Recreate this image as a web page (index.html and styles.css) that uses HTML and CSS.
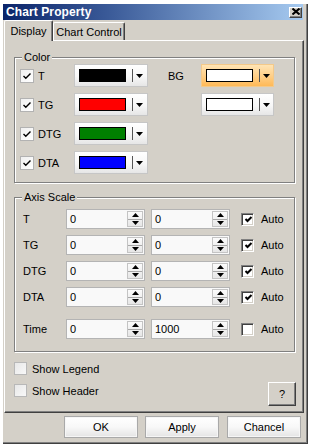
FILE: index.html
```html
<!DOCTYPE html>
<html>
<head>
<meta charset="utf-8">
<title>Chart Property</title>
<link rel="stylesheet" href="styles.css">
</head>
<body>
<div class="dialog">
  <div class="titlebar">
    <span class="title">Chart Property</span>
    <span class="close"><svg width="8" height="7" viewBox="0 0 8 7"><path d="M0.5 0.5 L7.5 6.5 M7.5 0.5 L0.5 6.5" stroke="#000" stroke-width="2"/></svg></span>
  </div>
  <div class="tabs">
    <div class="tab active">Display</div>
    <div class="tab">Chart Control</div>
  </div>
  <div class="panel">
    <div class="group color-group">
      <span class="legend">Color</span>
      <div class="crow">
        <span class="cbl"><span class="xcb"><svg width="12" height="12" viewBox="0 0 12 12"><path d="M2.5 6 L4.8 8.3 L9.5 3.5" fill="none" stroke="#000" stroke-width="1.4"/></svg></span>T</span>
        <span class="combo"><span class="swatch sw-black"></span><span class="sep"></span><svg class="arrow" width="7" height="4" viewBox="0 0 7 4"><path d="M0 0 H7 L3.5 4 Z" fill="#000"/></svg></span>
        <span class="bglabel">BG</span>
        <span class="combo hot"><span class="swatch sw-white"></span><span class="sep"></span><svg class="arrow" width="7" height="4" viewBox="0 0 7 4"><path d="M0 0 H7 L3.5 4 Z" fill="#000"/></svg></span>
      </div>
      <div class="crow">
        <span class="cbl"><span class="xcb"><svg width="12" height="12" viewBox="0 0 12 12"><path d="M2.5 6 L4.8 8.3 L9.5 3.5" fill="none" stroke="#000" stroke-width="1.4"/></svg></span>TG</span>
        <span class="combo"><span class="swatch sw-red"></span><span class="sep"></span><svg class="arrow" width="7" height="4" viewBox="0 0 7 4"><path d="M0 0 H7 L3.5 4 Z" fill="#000"/></svg></span>
        <span class="bglabel"></span>
        <span class="combo"><span class="swatch sw-white"></span><span class="sep"></span><svg class="arrow" width="7" height="4" viewBox="0 0 7 4"><path d="M0 0 H7 L3.5 4 Z" fill="#000"/></svg></span>
      </div>
      <div class="crow">
        <span class="cbl"><span class="xcb"><svg width="12" height="12" viewBox="0 0 12 12"><path d="M2.5 6 L4.8 8.3 L9.5 3.5" fill="none" stroke="#000" stroke-width="1.4"/></svg></span>DTG</span>
        <span class="combo"><span class="swatch sw-green"></span><span class="sep"></span><svg class="arrow" width="7" height="4" viewBox="0 0 7 4"><path d="M0 0 H7 L3.5 4 Z" fill="#000"/></svg></span>
      </div>
      <div class="crow">
        <span class="cbl"><span class="xcb"><svg width="12" height="12" viewBox="0 0 12 12"><path d="M2.5 6 L4.8 8.3 L9.5 3.5" fill="none" stroke="#000" stroke-width="1.4"/></svg></span>DTA</span>
        <span class="combo"><span class="swatch sw-blue"></span><span class="sep"></span><svg class="arrow" width="7" height="4" viewBox="0 0 7 4"><path d="M0 0 H7 L3.5 4 Z" fill="#000"/></svg></span>
      </div>
    </div>

    <div class="group axis-group">
      <span class="legend">Axis Scale</span>
      <div class="arow">
        <span class="alabel">T</span>
        <span class="spinbox"><span class="val">0</span><span class="spin"><span class="sb"><svg width="7" height="4" viewBox="0 0 7 4"><path d="M0 4 H7 L3.5 0 Z" fill="#000"/></svg></span><span class="sb down"><svg width="7" height="4" viewBox="0 0 7 4"><path d="M0 0 H7 L3.5 4 Z" fill="#000"/></svg></span></span></span>
        <span class="spinbox second"><span class="val">0</span><span class="spin"><span class="sb"><svg width="7" height="4" viewBox="0 0 7 4"><path d="M0 4 H7 L3.5 0 Z" fill="#000"/></svg></span><span class="sb down"><svg width="7" height="4" viewBox="0 0 7 4"><path d="M0 0 H7 L3.5 4 Z" fill="#000"/></svg></span></span></span>
        <span class="ccb"><svg width="9" height="9" viewBox="0 0 9 9"><path d="M1.5 4 L3.5 6 L7.5 2" fill="none" stroke="#000" stroke-width="2"/></svg></span>
        <span class="autolabel">Auto</span>
      </div>
      <div class="arow">
        <span class="alabel">TG</span>
        <span class="spinbox"><span class="val">0</span><span class="spin"><span class="sb"><svg width="7" height="4" viewBox="0 0 7 4"><path d="M0 4 H7 L3.5 0 Z" fill="#000"/></svg></span><span class="sb down"><svg width="7" height="4" viewBox="0 0 7 4"><path d="M0 0 H7 L3.5 4 Z" fill="#000"/></svg></span></span></span>
        <span class="spinbox second"><span class="val">0</span><span class="spin"><span class="sb"><svg width="7" height="4" viewBox="0 0 7 4"><path d="M0 4 H7 L3.5 0 Z" fill="#000"/></svg></span><span class="sb down"><svg width="7" height="4" viewBox="0 0 7 4"><path d="M0 0 H7 L3.5 4 Z" fill="#000"/></svg></span></span></span>
        <span class="ccb"><svg width="9" height="9" viewBox="0 0 9 9"><path d="M1.5 4 L3.5 6 L7.5 2" fill="none" stroke="#000" stroke-width="2"/></svg></span>
        <span class="autolabel">Auto</span>
      </div>
      <div class="arow">
        <span class="alabel">DTG</span>
        <span class="spinbox"><span class="val">0</span><span class="spin"><span class="sb"><svg width="7" height="4" viewBox="0 0 7 4"><path d="M0 4 H7 L3.5 0 Z" fill="#000"/></svg></span><span class="sb down"><svg width="7" height="4" viewBox="0 0 7 4"><path d="M0 0 H7 L3.5 4 Z" fill="#000"/></svg></span></span></span>
        <span class="spinbox second"><span class="val">0</span><span class="spin"><span class="sb"><svg width="7" height="4" viewBox="0 0 7 4"><path d="M0 4 H7 L3.5 0 Z" fill="#000"/></svg></span><span class="sb down"><svg width="7" height="4" viewBox="0 0 7 4"><path d="M0 0 H7 L3.5 4 Z" fill="#000"/></svg></span></span></span>
        <span class="ccb"><svg width="9" height="9" viewBox="0 0 9 9"><path d="M1.5 4 L3.5 6 L7.5 2" fill="none" stroke="#000" stroke-width="2"/></svg></span>
        <span class="autolabel">Auto</span>
      </div>
      <div class="arow">
        <span class="alabel">DTA</span>
        <span class="spinbox"><span class="val">0</span><span class="spin"><span class="sb"><svg width="7" height="4" viewBox="0 0 7 4"><path d="M0 4 H7 L3.5 0 Z" fill="#000"/></svg></span><span class="sb down"><svg width="7" height="4" viewBox="0 0 7 4"><path d="M0 0 H7 L3.5 4 Z" fill="#000"/></svg></span></span></span>
        <span class="spinbox second"><span class="val">0</span><span class="spin"><span class="sb"><svg width="7" height="4" viewBox="0 0 7 4"><path d="M0 4 H7 L3.5 0 Z" fill="#000"/></svg></span><span class="sb down"><svg width="7" height="4" viewBox="0 0 7 4"><path d="M0 0 H7 L3.5 4 Z" fill="#000"/></svg></span></span></span>
        <span class="ccb"><svg width="9" height="9" viewBox="0 0 9 9"><path d="M1.5 4 L3.5 6 L7.5 2" fill="none" stroke="#000" stroke-width="2"/></svg></span>
        <span class="autolabel">Auto</span>
      </div>
      <div class="arow time">
        <span class="alabel">Time</span>
        <span class="spinbox"><span class="val">0</span><span class="spin"><span class="sb"><svg width="7" height="4" viewBox="0 0 7 4"><path d="M0 4 H7 L3.5 0 Z" fill="#000"/></svg></span><span class="sb down"><svg width="7" height="4" viewBox="0 0 7 4"><path d="M0 0 H7 L3.5 4 Z" fill="#000"/></svg></span></span></span>
        <span class="spinbox second"><span class="val">1000</span><span class="spin"><span class="sb"><svg width="7" height="4" viewBox="0 0 7 4"><path d="M0 4 H7 L3.5 0 Z" fill="#000"/></svg></span><span class="sb down"><svg width="7" height="4" viewBox="0 0 7 4"><path d="M0 0 H7 L3.5 4 Z" fill="#000"/></svg></span></span></span>
        <span class="ccb"></span>
        <span class="autolabel">Auto</span>
      </div>
    </div>

    <div class="bottom">
      <div class="opts">
        <div class="opt"><span class="fcb"></span>Show Legend</div>
        <div class="opt"><span class="fcb"></span>Show Header</div>
      </div>
      <div class="help">?</div>
    </div>
  </div>
  <div class="buttons">
    <div class="btn">OK</div>
    <div class="btn">Apply</div>
    <div class="btn last">Chancel</div>
  </div>
</div>
</body>
</html>
```

FILE: styles.css
```css
* { box-sizing: border-box; }

html, body {
  margin: 0;
  padding: 0;
}

body {
  width: 309px;
  height: 447px;
  overflow: hidden;
  background: #ffffff;
  font-family: "Liberation Sans", Arial, sans-serif;
  font-size: 11px;
  color: #000;
}

.dialog {
  margin: 4px 0 0 3px;
  width: 305px;
  height: 440px;
  background: #d4d0c8;
  border-right: 1px solid #404040;
  border-bottom: 1px solid #404040;
  box-shadow: inset -1px -1px 0 #808080;
  display: flex;
  flex-direction: column;
}

.titlebar {
  width: 300px;
  height: 16px;
  flex: none;
  background: linear-gradient(90deg, #0a246a 0%, #3a5a98 35%, #a6caf0 100%);
  display: flex;
  align-items: center;
  padding-left: 3px;
}

.title {
  color: #fff;
  font-weight: bold;
  font-size: 12px;
  letter-spacing: 0.1px;
}

.close {
  margin-left: auto;
  margin-right: 1px;
  width: 13px;
  height: 11px;
  background: #d4d0c8;
  border-top: 1px solid #fff;
  border-left: 1px solid #fff;
  border-right: 1px solid #404040;
  border-bottom: 1px solid #404040;
  box-shadow: inset -1px -1px 0 #808080;
  display: flex;
  align-items: center;
  justify-content: center;
  padding-bottom: 1px;
}

.close svg { display: block; }

.tabs {
  height: 20px;
  flex: none;
  display: flex;
  align-items: flex-end;
  padding-left: 1px;
}

.tab {
  width: 72px;
  height: 18px;
  border-top: 1px solid #fff;
  border-left: 1px solid #fff;
  border-right: 1px solid #404040;
  box-shadow: inset -1px 0 0 #808080;
  border-radius: 2px 2px 0 0;
  display: flex;
  align-items: center;
  justify-content: center;
  padding-top: 1px;
  white-space: nowrap;
}

.tab.active {
  width: 49px;
  height: 21px;
  margin-bottom: -1px;
  position: relative;
  z-index: 1;
  background: #d4d0c8;
  padding-top: 0;
  padding-bottom: 1px;
}

.panel {
  margin-left: 1px;
  width: 300px;
  height: 373px;
  flex: none;
  border-top: 1px solid #fff;
  border-left: 1px solid #fff;
  border-right: 1px solid #404040;
  border-bottom: 1px solid #404040;
  box-shadow: inset -1px -1px 0 #808080;
  display: flex;
  flex-direction: column;
}

.group {
  position: relative;
  margin-left: 9px;
  width: 281px;
  border: 1px solid #808080;
  box-shadow: inset 1px 1px 0 #fff, 1px 1px 0 #fff;
  display: flex;
  flex-direction: column;
}

.legend {
  position: absolute;
  top: -8px;
  left: 7px;
  padding: 0 2px;
  background: #d4d0c8;
  line-height: 14px;
}

.color-group {
  margin-top: 16px;
  height: 126px;
  padding: 6px 0 0 5px;
  gap: 6px;
}

.crow {
  height: 23px;
  display: flex;
  align-items: center;
}

.cbl {
  width: 54px;
  display: flex;
  align-items: center;
  gap: 4px;
}

.xcb {
  width: 14px;
  height: 14px;
  border: 1px solid #b2b2b2;
  background: linear-gradient(135deg, #f0f0f0, #ffffff);
  display: flex;
  align-items: center;
  justify-content: center;
}

.xcb svg { display: block; }

.combo {
  width: 74px;
  height: 23px;
  border: 1px solid #c6c6c6;
  background: linear-gradient(#ffffff 0%, #f7f7f7 55%, #e6e6e6 100%);
  display: flex;
  align-items: center;
  padding-left: 4px;
}

.combo.hot {
  width: 73px;
  border-color: #f3c98a;
  background: linear-gradient(#ffe4b4 0%, #ffd08a 50%, #ffb957 100%);
}

.bglabel + .combo { width: 73px; }

.swatch {
  width: 47px;
  height: 13px;
  border: 1px solid #000;
}

.sw-black { background: #000; }
.sw-red { background: #ff0000; }
.sw-green { background: #008000; }
.sw-blue { background: #0000ff; }
.sw-white { background: #fff; }

.sep {
  width: 1px;
  height: 13px;
  margin-left: 6px;
  background: #555;
}

.arrow {
  display: block;
  margin-left: 3px;
}

.bglabel {
  width: 33px;
  margin-left: 20px;
}

.axis-group {
  margin-top: 14px;
  height: 155px;
  padding: 11px 0 0 8px;
  gap: 6px;
}

.arow {
  height: 20px;
  display: flex;
  align-items: center;
}

.arow.time { margin-top: 6px; }

.alabel { width: 43px; }

.spinbox {
  width: 79px;
  height: 20px;
  border: 1px solid #b4b4b4;
  background: #f9f9f9;
  display: flex;
  align-items: center;
  padding-left: 3px;
}

.spinbox.second { margin-left: 6px; }

.val { flex: 1; }

.spin {
  width: 16px;
  height: 16px;
  margin-right: 1px;
  border: 1px solid #c4c4c4;
  background: linear-gradient(#fbfbfb, #e6e6e6);
  display: flex;
  flex-direction: column;
}

.sb {
  flex: 1;
  display: flex;
  align-items: center;
  justify-content: center;
}

.sb.down { border-top: 1px solid #a8a8a8; }

.sb svg { display: block; }

.ccb {
  width: 13px;
  height: 13px;
  margin-left: 11px;
  background: #fff;
  border-top: 1px solid #808080;
  border-left: 1px solid #808080;
  border-right: 1px solid #fff;
  border-bottom: 1px solid #fff;
  box-shadow: inset 1px 1px 0 #404040, inset -1px -1px 0 #d4d0c8;
  display: flex;
  align-items: center;
  justify-content: center;
  padding: 1px 0 0 1px;
}

.ccb svg { display: block; }

.autolabel { margin-left: 7px; }

.bottom {
  margin-left: 9px;
  margin-top: 10px;
  width: 282px;
  display: flex;
  justify-content: space-between;
  align-items: flex-start;
}

.opts {
  display: flex;
  flex-direction: column;
  gap: 9px;
}

.opt {
  height: 13px;
  display: flex;
  align-items: center;
  gap: 5px;
}

.fcb {
  width: 13px;
  height: 13px;
  border: 1px solid #b8b8b8;
  background: linear-gradient(135deg, #e8e8e8, #f8f8f8);
}

.help {
  margin-top: 20px;
  width: 28px;
  height: 24px;
  border-top: 1px solid #fff;
  border-left: 1px solid #fff;
  border-right: 1px solid #404040;
  border-bottom: 1px solid #404040;
  box-shadow: inset -1px -1px 0 #808080;
  display: flex;
  align-items: center;
  justify-content: center;
}

.buttons {
  margin-top: 3px;
  padding-left: 61px;
  display: flex;
  gap: 7px;
}

.btn {
  width: 74px;
  height: 22px;
  border: 1px solid #a9a9a9;
  box-shadow: inset 0 0 0 1px #f6f6f6;
  background: linear-gradient(#ffffff 0%, #f8f8f8 50%, #e4e4e4 100%);
  display: flex;
  align-items: center;
  justify-content: center;
}

.btn.last { margin-left: 1px; }
```
